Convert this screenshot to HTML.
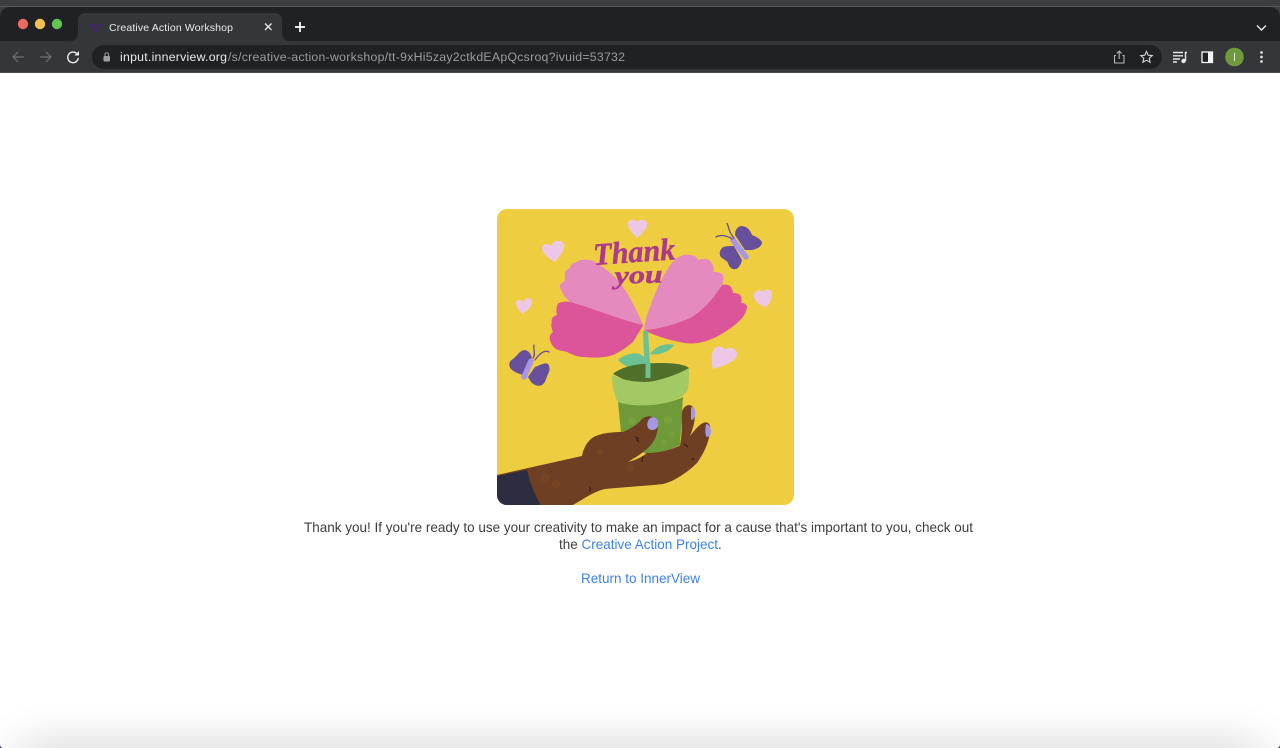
<!DOCTYPE html>
<html><head><meta charset="utf-8"><title>Creative Action Workshop</title>
<style>
html,body{margin:0;padding:0;background:#fff;width:1280px;height:748px;overflow:hidden}
body{font-family:"Liberation Sans",sans-serif}
#w{position:absolute;left:0;top:0;width:1280px;height:748px;overflow:hidden;background:#fff}
.t{position:absolute;white-space:nowrap;color:#3d3d3d;font-size:14px;line-height:17px;transform:scaleX(.964);transform-origin:0 0}
.t a,.b{color:#3b82f0;text-decoration:none}
svg{position:absolute;left:0;top:0}
#sh{position:absolute;left:20px;right:20px;top:748px;height:30px;box-shadow:0 0 44px rgba(0,0,0,.22)}
</style></head><body><div id="w">
<div id="sh"></div>
<svg width="1280" height="748" viewBox="0 0 1280 748" font-family="Liberation Sans, sans-serif">
<defs><clipPath id="c"><rect x="497" y="209" width="297" height="296" rx="10"/></clipPath></defs>
<!-- chrome -->
<rect width="1280" height="73" fill="#3c3d40"/>
<path d="M0 73V18Q0 7 11 7H1269Q1280 7 1280 18V73Z" fill="#202124"/>
<path d="M0 6.500H1280" stroke="#55565a" stroke-width="1"/>
<rect y="41" width="1280" height="31" fill="#35363a"/>
<rect y="72" width="1280" height="1" fill="#4a4b4e"/>
<path d="M70 41Q78 41 78 33V21Q78 13 86 13H274Q282 13 282 21V33Q282 41 290 41Z" fill="#35363a"/>
<circle cx="23" cy="24" r="5.200" fill="#ec6a5e"/><circle cx="40" cy="24" r="5.200" fill="#f4bf4f"/><circle cx="57" cy="24" r="5.200" fill="#61c554"/>
<g fill="#4b1d8a"><circle cx="91" cy="25" r="1.300"/><circle cx="95.500" cy="27" r="1.500"/><circle cx="100" cy="25" r="1.300"/><circle cx="95.500" cy="30.500" r="1.300"/><circle cx="95.500" cy="23.800" r="1"/></g>
<text x="109" y="31" font-size="10.500" fill="#e8eaed" textLength="124">Creative Action Workshop</text>
<path d="M265 23.500l6.500 6.500M271.500 23.500l-6.500 6.500" stroke="#e8eaed" stroke-width="1.300"/>
<path d="M300 22v10M295 27h10" stroke="#fff" stroke-width="1.700"/>
<path d="M1257 25.500l4.500 4.500 4.500-4.500" stroke="#e8eaed" stroke-width="1.400" fill="none"/>
<!-- nav -->
<g fill="none" stroke-width="1.200">
<path d="M24 57H13M18 52l-5 5 5 5" stroke="#6f7073"/>
<path d="M40 57H51M46 52l5 5-5 5" stroke="#6f7073"/>
<path d="M77.500 54.500A5.300 5.300 0 1 0 78.300 58" stroke="#eceef0" stroke-width="1.400"/>
</g>
<path d="M74.500 55.500H79V51Z" fill="#eceef0"/>
<rect x="92" y="45" width="1070" height="24" rx="12" fill="#202124"/>
<rect x="103.500" y="56" width="6.500" height="5.500" rx="1" fill="#9aa0a6"/>
<path d="M105 56v-1.500a1.800 1.800 0 0 1 3.600 0V56" stroke="#9aa0a6" fill="none"/>
<text x="120" y="61.200" font-size="12.300" fill="#e8eaed" textLength="107">input.innerview.org</text>
<text x="228" y="61.200" font-size="12.300" fill="#9a9c9f" textLength="397">/s/creative-action-workshop/tt-9xHi5zay2ctkdEApQcsroq?ivuid=53732</text>
<g fill="none" stroke="#b4b6b9" stroke-width="1.100">
<path d="M1116 55.500h-1.500v7.500h9.500v-7.500h-1.500M1119.200 59V51.500M1116.800 53.500l2.400-2.500 2.400 2.500"/>
<path d="M1146.500 51.500l1.700 3.700 4 .4-3 2.700.9 4-3.600-2.100-3.600 2.100.9-4-3-2.700 4-.4z" stroke="#d5d7da"/>
</g>
<g stroke="#e3e5e8" stroke-width="1.400" fill="none">
<path d="M1173 52.500h10M1173 55.800h10M1173 59h7M1173 62h4M1185.500 61V52.500h1.500"/>
</g>
<circle cx="1183.500" cy="61" r="2.200" fill="#e8eaed"/>
<rect x="1202" y="52" width="10.500" height="10.500" fill="#202124" stroke="#f1f3f4" stroke-width="1.300"/>
<rect x="1208" y="52" width="5" height="11" fill="#f1f3f4"/>
<circle cx="1234.500" cy="57" r="9.300" fill="#6c9a3c"/>
<rect x="1234" y="53" width="1" height="8" fill="#e9f0dd"/>
<g fill="#d8dadd"><circle cx="1261.500" cy="52.500" r="1.400"/><circle cx="1261.500" cy="57" r="1.400"/><circle cx="1261.500" cy="61.500" r="1.400"/></g>
<path d="M0 744Q0 748 3 748H0ZM1280 744Q1280 748 1277 748H1280Z" fill="#23283a"/>

<!-- illustration -->
<g clip-path="url(#c)">
<rect x="497" y="209" width="297" height="296" fill="#efcd40"/>
<!-- hearts -->
<g fill="#ecc8e6">
<path d="M637 238C632 233 627 228 628 223C629 219 635 219 637 222C639 219 646 219 647 223C648 228 643 233 637 238Z"/>
<path d="M555 262C549 259 542 253 542 248C542 243 548 243 551 246C553 240 561 239 564 244C566 250 559 256 555 262Z"/>
<path d="M522 314C519 310 516 307 516 303C517 299 521 299 523 302C525 298 531 296 532 301C533 306 527 311 522 314Z"/>
<path d="M766 307C761 306 754 302 754 296C754 290 760 289 763 292C766 288 772 289 772 294C772 300 769 304 766 307Z"/>
<path d="M713 369C711 361 711 352 715 348C719 345 723 347 725 350C728 346 737 348 737 354C737 361 724 366 713 369Z"/>
</g>
<!-- flower -->
<path d="M643.300 325C640 318 630 296 623 287C617 279 612 274 606.700 270C600 265 595 261 590 260C583 259 578 260 576.700 262C573 263 570 265 570 268C566 270 564 273 565 276C565 278 565 280 564 282C561 283 559 285 560 287C561 291 563 294 565 297L570 302L606.700 316Z" fill="#e58abf"/>
<path d="M643.300 325C620 320 592 308 570 302C565 301 561 302 558.300 303.300C556 307 556 312 557 315C553 316 551 319 551.700 322C551 325 551 327 553 332C550 334 549 337 550 340C551 344 553 347 556 349C560 351 564 351 567 352C573 355 578 357 583 357C593 358 604 358 613 355C620 352 627 347 633 342Z" fill="#dc5499"/>
<path d="M644 330C645 322 647 314 650 307C654 296 658 286 663 277C667 269 672 262 677 258C681 255 686 254 690 255C694 255 697 257 698 260C703 258 709 259 710 261C713 264 714 268 714 272C718 272 722 273 723 275C724 279 723 282 722 285C718 292 714 298 710 303C704 309 697 314 690 318C683 322 675 325 667 327Z" fill="#e58abf"/>
<path d="M644 330C660 329 677 324 690 318C703 311 714 298 722 285C725 284 729 285 730 286C732 288 733 291 733 293C736 293 739 294 740 295C742 298 742 301 741 303C744 303 746 304 747 306C747 310 745 314 743 317C737 324 730 329 723 333C717 337 710 340 703 342C695 344 687 344 680 342C670 340 659 337 650 333Z" fill="#dc5499"/>
<!-- stem/leaves -->
<path d="M643 331L648 331L651 378H645Z" fill="#6cc193"/>
<path d="M650 354C655 347 665 342 674 345C670 351 660 356 650 354Z" fill="#6cc193"/>
<path d="M618 360C623 355 633 352 640 354C646 358 647 362 648 366C640 372 625 368 618 360Z" fill="#6cc193"/>
<!-- pot -->
<path d="M613 374C622 366 640 363 660 363C672 363 684 364 689 368L688 380L640 388Z" fill="#50702a"/>
<rect x="645.500" y="362" width="5" height="16" fill="#6cc193"/>
<path d="M612 375C620 379 632 382 645 382C655 382 675 376 689 368C689 378 689 388 687 391C683 399 660 407 645 407C630 407 620 404 618 402C614 396 612 385 612 375Z" fill="#a2c964"/>
<path d="M618 402C635 408 665 406 683 397L680 445C670 450 655 456 647 454C635 450 625 440 621 433Z" fill="#6f9a3a"/>
<g fill="#9db84a" opacity=".22"><circle cx="632" cy="421" r="4"/><circle cx="668" cy="420" r="4"/><circle cx="672" cy="434" r="3"/><circle cx="664" cy="442" r="2.500"/></g>
<!-- hand -->
<path d="M680 446C683 430 681 418 682 412C684 404 692 403 694 409C697 418 692 434 686 444Z" fill="#6e3f22"/>
<path d="M497 475L582 456C583 450 586 443 592 438C600 433 612 432 623 432C630 429 637 425 641 420C645 416 650 415 654 418C658 421 659 428 656 436C653 446 643 453 628 462C636 460 642 457 647 453C660 453 672 450 685 443C690 436 697 426 703 423C708 421 711 424 710 431C709 444 702 456 697 463C688 472 675 481 663 484C645 486 625 487 605 489C595 491 585 498 573 505L540 510H497Z" fill="#6e3f22"/>
<path d="M497 476L527 470C530 483 535 495 541 506H497Z" fill="#2c2d40"/>
<path d="M635 437l4 2M636 439l3 3M643 456l-1 6M684 444l4 3M692 460l2-2M590 486l0 6" stroke="#2e170b" stroke-width=".9" fill="none"/>
<path d="M648 421C650 416 656 416 658 421C659 426 657 430 652 430C648 430 646 426 648 421Z" fill="#a795e6"/>
<path d="M691 407C694 407 696 410 695 415C695 418 693 420 691 420Z" fill="#a795e6"/>
<path d="M706 424C709 424 711 428 711 432C711 435 709 437 707 437C705 436 705 430 706 424Z" fill="#a795e6"/>
<g fill="#a0692f" opacity=".14"><circle cx="545" cy="478" r="5"/><circle cx="556" cy="484" r="4"/><circle cx="630" cy="468" r="4"/><circle cx="600" cy="452" r="3"/></g>
<!-- butterflies -->
<g fill="#674f9c">
<path d="M735 235C735 230 737 227 741 226C746 226 750 229 752 235C757 237 762 240 762 243C761 247 757 249 752 250L745 250Z"/>
<path d="M734 246C729 246 724 246 722 248C719 251 719 256 722 258C725 260 727 261 728 263C729 267 732 270 736 269C739 268 741 264 742 260Z"/>
<path d="M525 350C529 351 532 355 532 360L524 375C519 374 514 372 511 369C508 365 509 361 513 359C517 356 520 350 525 350Z"/>
<path d="M535 367C540 365 545 362 548 364C550 367 550 371 548 374C546 378 546 382 542 385C538 387 534 385 531 382L528 377Z"/>
</g>
<path d="M733 240L746 257" stroke="#a795e6" stroke-width="5.500" stroke-linecap="round"/>
<path d="M531 361L524 377" stroke="#a795e6" stroke-width="5.500" stroke-linecap="round"/>
<path d="M732 239C728 236 721 234 716 237M734 238C728 232 729 226 727 223.500" stroke="#674f9c" stroke-width="1.300" fill="none" stroke-linecap="round"/>
<path d="M533 358C536 354 533 349 534 345M535 360C540 353 545 350 549 352" stroke="#674f9c" stroke-width="1.300" fill="none" stroke-linecap="round"/>
<!-- lettering -->
<g font-family="Liberation Serif, serif" font-style="italic" font-weight="700" fill="#ad3a8c" stroke="#ad3a8c" stroke-width=".5">
<text x="594" y="265" font-size="31" transform="rotate(-4 594 265)" textLength="82" lengthAdjust="spacingAndGlyphs">Thank</text>
<text x="615" y="284" font-size="25" transform="rotate(-2 615 284)" textLength="48" lengthAdjust="spacingAndGlyphs">you</text>
</g>
</g>
</svg>
<div class="t" style="left:304px;top:519px">Thank you! If you're ready to use your creativity to make an impact for a cause that's important to you, check out</div>
<div class="t" style="left:559px;top:536px">the <a>Creative Action Project</a>.</div>
<div class="t b" style="left:581px;top:570px">Return to InnerView</div>
</div></body></html>
